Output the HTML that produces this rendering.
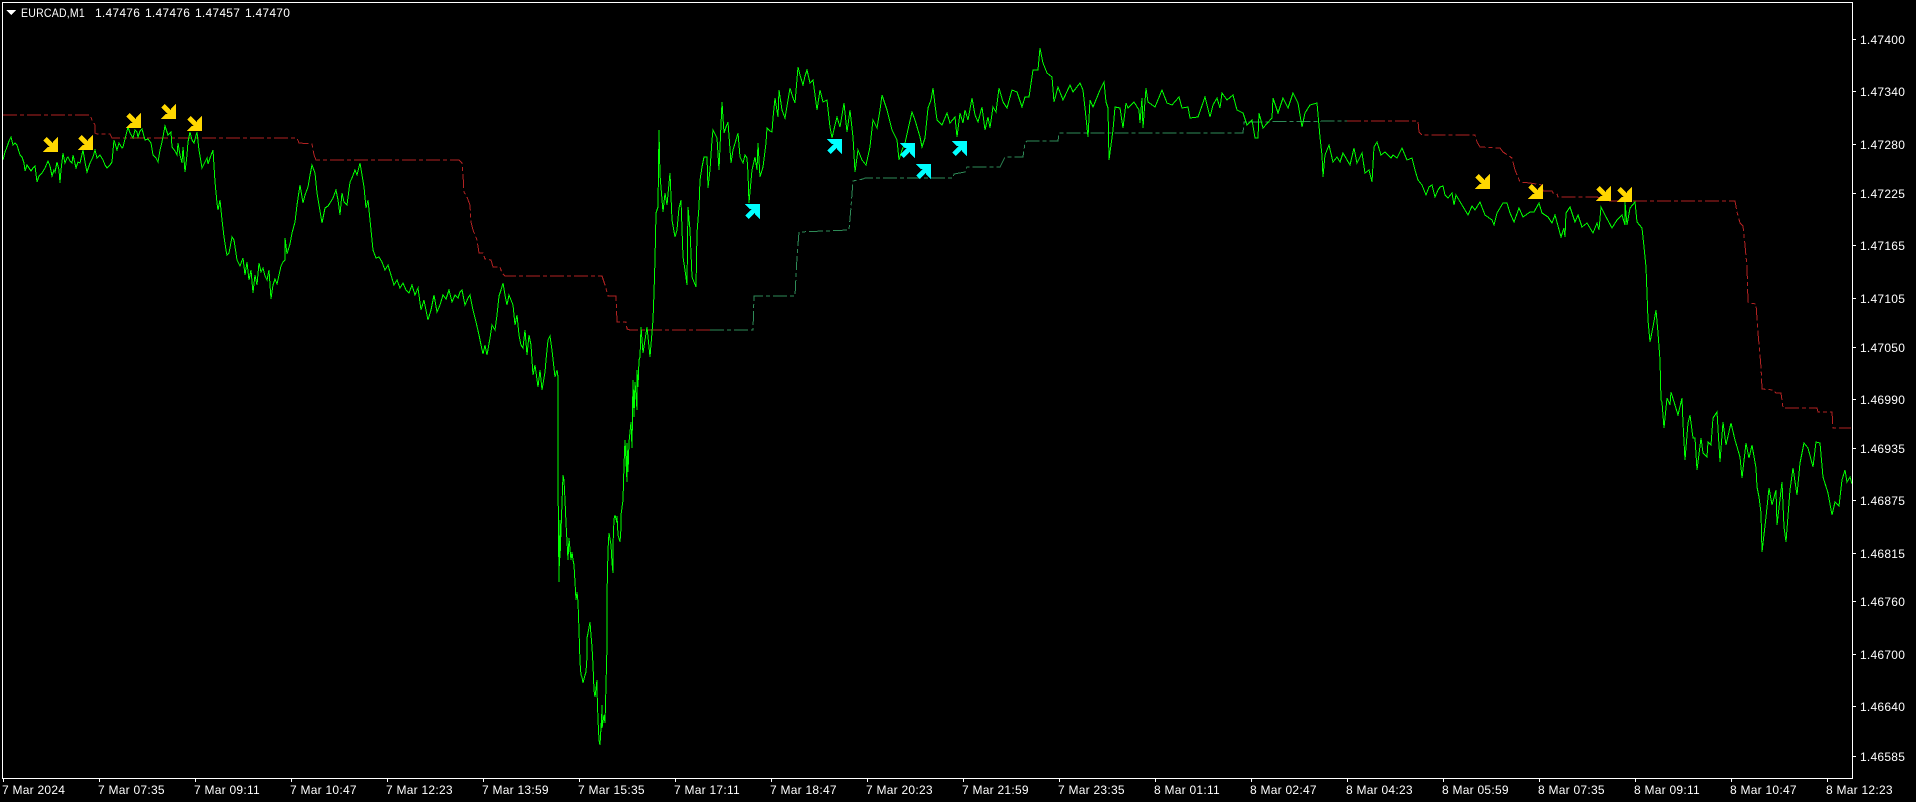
<!DOCTYPE html>
<html><head><meta charset="utf-8"><title>EURCAD,M1</title>
<style>
html,body{margin:0;padding:0;background:#000;width:1916px;height:802px;overflow:hidden}
svg{display:block}
text{font-family:"Liberation Sans",sans-serif;font-size:12px;letter-spacing:.25px;fill:#fff}
</style></head><body>
<svg width="1916" height="802" viewBox="0 0 1916 802" xmlns="http://www.w3.org/2000/svg">
<rect width="1916" height="802" fill="#000"/>
<polyline fill="none" stroke="#b22222" stroke-width="1" stroke-dasharray="14 3 4 3" shape-rendering="crispEdges" points="3,115 90,115 92,120 95,125 95,133 97,134 110,134 112,138 297,138 299,143 312,144 314,155 316,160 459,160 462,163 463,175 464,192 467,197 470,205 471,222 473,230 477,240 479,253 483,253 485,259 491,260 493,267 500,267 502,273 505,276 602,276 605,285 608,296 616,296 617,322 626,322 627,329 630,330 710,330"/>
<polyline fill="none" stroke="#2e8b57" stroke-width="1" stroke-dasharray="14 3 4 3" shape-rendering="crispEdges" points="710,330 753,330 754,296 795,296 797,257 799,232 849,230 851,207 853,181 863,179 865,178 953,178 954,174 965,172 967,167 1000,167 1002,163 1005,157 1023,157 1025,143 1027,141 1058,141 1059,133 1243,133 1244,122 1347,121"/>
<polyline fill="none" stroke="#b22222" stroke-width="1" stroke-dasharray="14 3 4 3" shape-rendering="crispEdges" points="1347,121 1418,121 1419,132 1422,135 1475,135 1477,142 1480,147 1500,148 1503,152 1512,158 1515,170 1520,182 1530,183 1542,185 1543,191 1552,191 1553,193 1557,194 1558,197 1597,197 1610,201 1735,201 1737,212 1740,223 1743,226 1745,245 1747,267 1748,302 1750,303 1756,304 1758,333 1761,367 1762,389 1773,390 1776,393 1781,393 1783,408 1817,408 1818,412 1832,412 1833,428 1851,428"/>
<polyline fill="none" stroke="#00ff00" stroke-width="1" shape-rendering="crispEdges" stroke-linejoin="miter" points="3,160 5,152 7,147 9,141 11,137 13,145 15,143 17,145 20,155 22,157 24,163 25,171 27,165 29,168 31,171 33,168 35,166 37,182 39,176 42,173 45,168 48,161 50,166 52,176 54,170 55,172 57,162 59,170 60,183 61,170 63,153 65,163 67,158 68,157 70,161 72,163 73,155 76,168 78,162 80,163 83,150 85,162 87,172 90,163 93,157 95,150 97,158 100,155 103,160 105,165 107,168 110,165 112,162 114,140 117,150 119,143 122,148 123,147 126,135 128,127 130,133 133,138 135,130 137,132 138,137 140,131 142,129 145,140 148,139 151,143 153,155 156,158 158,162 160,150 162,142 165,126 168,135 171,132 172,147 175,151 177,155 178,143 180,155 182,163 183,147 185,172 187,155 188,142 190,132 192,140 194,143 197,132 199,150 202,168 205,162 207,158 208,164 210,158 213,150 215,182 217,203 218,210 220,200 222,220 224,237 226,250 227,255 229,253 232,237 234,240 237,260 240,266 243,258 245,275 247,262 249,280 251,270 253,293 255,275 257,285 259,263 261,272 263,268 265,276 267,280 269,270 271,299 273,285 275,279 277,284 279,275 281,266 283,262 285,260 285,238 287,254 290,244 292,233 295,222 297,205 300,185 303,203 305,195 308,187 310,175 312,165 315,173 317,193 319,205 322,223 325,208 328,206 330,203 333,198 336,190 338,200 340,215 342,193 344,202 347,205 350,182 352,178 355,170 357,175 360,163 362,175 364,187 366,208 368,200 371,230 373,250 376,258 379,257 382,262 385,270 388,265 391,275 394,285 397,280 400,288 403,283 406,290 409,293 412,285 415,295 418,288 421,310 424,300 428,320 431,310 434,295 437,312 440,305 443,295 446,299 449,290 452,302 455,295 458,298 460,292 462,290 465,305 468,298 470,295 473,310 476,322 479,335 481,345 483,354 485,345 487,355 490,338 492,325 495,330 497,315 499,296 501,290 503,283 505,295 507,305 509,295 511,300 513,305 515,325 517,315 519,335 521,345 523,348 525,330 527,355 529,335 531,345 532,360 533,375 535,365 538,387 540,370 542,390 545,372 546,360 548,340 550,336 552,350 554,368 555,377 557,370 558,377 558,480 559,582 560,520 560,558 562,503 563,475 564,480 565,500 566,523 568,560 569,538 571,560 572,552 573,560 574,565 575,582 576,600 577,592 578,602 579,630 580,662 581,675 582,677 583,683 585,675 586,672 587,657 587,638 588,633 590,622 591,635 592,647 593,665 594,690 595,697 597,680 597,690 598,720 599,740 600,745 602,710 602,705 602,728 604,715 605,723 606,685 607,645 607,595 608,550 609,533 611,545 612,563 613,573 613,545 614,519 615,515 617,523 617,516 618,535 620,542 621,528 621,515 623,500 624,465 625,440 627,482 627,443 628,472 629,442 631,422 632,448 633,380 634,417 635,382 637,410 637,370 638,387 639,360 640,357 641,327 643,353 647,327 650,357 653,320 654,293 655,260 656,213 658,207 659,130 660,175 663,212 665,193 667,205 670,173 672,220 675,237 677,230 679,208 681,200 683,257 685,270 687,285 688,207 690,230 692,277 696,287 697,233 699,207 700,180 702,167 704,157 707,157 708,188 710,170 712,140 713,130 715,134 717,138 719,170 722,102 724,133 726,127 728,122 731,163 733,150 736,140 738,133 740,157 743,163 745,155 747,158 748,173 749,203 752,170 755,157 757,170 758,143 760,177 763,167 766,143 767,128 770,131 772,132 773,118 775,98 778,117 779,90 782,110 785,118 788,100 790,88 793,98 795,103 798,67 800,75 803,85 805,76 807,70 810,83 813,80 817,110 820,90 823,102 827,100 830,127 832,138 835,125 837,117 840,127 842,115 844,103 847,132 850,110 853,137 855,172 858,150 862,160 866,165 870,147 873,120 877,128 880,110 882,95 887,110 892,130 897,140 899,160 902,150 905,143 909,125 912,112 915,120 920,137 922,147 925,138 928,108 931,100 933,88 935,105 937,120 942,125 947,113 950,123 955,117 957,137 960,113 963,123 965,110 968,120 972,98 975,115 978,122 982,107 985,130 988,117 990,128 993,107 996,112 999,88 1003,102 1007,108 1012,90 1017,92 1022,107 1025,97 1029,97 1033,70 1038,70 1040,48 1043,63 1047,73 1052,77 1054,102 1058,87 1063,100 1070,85 1073,92 1080,83 1083,90 1085,108 1088,137 1090,100 1093,107 1100,90 1104,82 1106,102 1108,108 1109,160 1113,130 1115,107 1120,108 1123,128 1126,103 1128,108 1134,102 1139,110 1140,123 1142,98 1143,128 1146,88 1148,102 1155,107 1162,90 1167,103 1172,105 1179,97 1182,108 1188,107 1190,118 1198,117 1205,97 1210,117 1213,105 1217,98 1220,108 1222,93 1227,100 1233,95 1237,110 1243,113 1247,125 1252,120 1255,138 1258,138 1259,113 1263,128 1272,118 1273,98 1278,113 1283,98 1288,108 1293,93 1298,103 1302,127 1305,113 1310,105 1317,103 1320,137 1322,155 1323,177 1325,155 1329,145 1333,162 1337,157 1340,162 1343,153 1350,165 1354,148 1357,163 1362,153 1365,173 1369,170 1372,182 1374,147 1377,142 1381,155 1385,152 1391,158 1393,155 1397,158 1402,148 1407,160 1412,158 1415,170 1418,180 1422,185 1426,195 1429,187 1432,185 1435,197 1438,190 1440,187 1443,186 1445,195 1448,198 1452,193 1454,205 1456,195 1462,205 1468,215 1472,206 1475,210 1480,202 1485,215 1492,220 1494,225 1497,213 1503,203 1507,203 1510,213 1514,222 1519,208 1523,217 1530,212 1534,212 1539,203 1542,213 1548,217 1552,223 1555,215 1561,237 1564,228 1565,237 1566,213 1570,207 1575,222 1578,215 1582,227 1587,223 1593,233 1597,223 1599,230 1601,207 1605,215 1612,228 1617,220 1622,215 1625,225 1625,202 1627,225 1630,208 1635,202 1637,222 1642,228 1644,247 1646,267 1648,320 1650,342 1653,327 1656,310 1658,333 1660,360 1661,400 1662,402 1664,428 1667,398 1670,405 1671,392 1675,405 1678,415 1682,398 1683,423 1685,460 1688,423 1690,415 1693,438 1695,438 1697,470 1701,438 1703,453 1707,457 1708,442 1711,445 1713,418 1717,412 1720,462 1723,422 1726,445 1731,423 1735,440 1740,457 1742,478 1746,443 1749,458 1752,445 1756,468 1757,487 1759,497 1761,513 1762,552 1766,517 1769,488 1772,505 1776,490 1777,525 1782,482 1784,527 1786,542 1790,490 1793,468 1797,495 1800,463 1804,443 1808,448 1813,467 1816,442 1820,443 1823,477 1828,493 1832,515 1835,502 1839,506 1842,480 1845,470 1847,482 1850,477 1852,484"/>
<defs>
<path id="y" d="M15 0V15H0L4.5 10H6.5L0 3.5L3.5 0L10 6.5V4.5Z" fill="#ffd700"/>
<path id="c" d="M15 15V0H0L4.5 5H6.5L0 11.5L3.5 15L10 8.5V10.5Z" fill="#00ffff"/>
</defs>
<g shape-rendering="crispEdges">
<use href="#y" x="43" y="137"/><use href="#y" x="78" y="135"/><use href="#y" x="126" y="113"/><use href="#y" x="161" y="104"/><use href="#y" x="187" y="116"/>
<use href="#y" x="1475" y="174"/><use href="#y" x="1528" y="184"/><use href="#y" x="1596" y="186"/><use href="#y" x="1617" y="187"/>
<use href="#c" x="745" y="204"/><use href="#c" x="827" y="139"/><use href="#c" x="900" y="143"/><use href="#c" x="916" y="164"/><use href="#c" x="952" y="141"/>
</g>
<g fill="#fff" shape-rendering="crispEdges">
<rect x="2" y="2" width="1851" height="1"/><rect x="2" y="778" width="1851" height="1"/><rect x="2" y="2" width="1" height="777"/><rect x="1852" y="2" width="1" height="777"/>
<rect x="1853" y="39" width="3" height="1"/><rect x="1853" y="91" width="3" height="1"/><rect x="1853" y="144" width="3" height="1"/><rect x="1853" y="193" width="3" height="1"/><rect x="1853" y="245" width="3" height="1"/><rect x="1853" y="298" width="3" height="1"/><rect x="1853" y="347" width="3" height="1"/><rect x="1853" y="399" width="3" height="1"/><rect x="1853" y="448" width="3" height="1"/><rect x="1853" y="500" width="3" height="1"/><rect x="1853" y="553" width="3" height="1"/><rect x="1853" y="601" width="3" height="1"/><rect x="1853" y="654" width="3" height="1"/><rect x="1853" y="706" width="3" height="1"/><rect x="1853" y="756" width="3" height="1"/>
<rect x="3" y="779" width="1" height="3"/><rect x="99" y="779" width="1" height="3"/><rect x="195" y="779" width="1" height="3"/><rect x="291" y="779" width="1" height="3"/><rect x="387" y="779" width="1" height="3"/><rect x="483" y="779" width="1" height="3"/><rect x="579" y="779" width="1" height="3"/><rect x="675" y="779" width="1" height="3"/><rect x="771" y="779" width="1" height="3"/><rect x="867" y="779" width="1" height="3"/><rect x="963" y="779" width="1" height="3"/><rect x="1059" y="779" width="1" height="3"/><rect x="1155" y="779" width="1" height="3"/><rect x="1251" y="779" width="1" height="3"/><rect x="1347" y="779" width="1" height="3"/><rect x="1443" y="779" width="1" height="3"/><rect x="1539" y="779" width="1" height="3"/><rect x="1635" y="779" width="1" height="3"/><rect x="1731" y="779" width="1" height="3"/><rect x="1827" y="779" width="1" height="3"/>
<path d="M6 10H16L11 15Z"/>
</g>
<text x="21" y="17" textLength="64" lengthAdjust="spacingAndGlyphs">EURCAD,M1</text><text x="95" y="17">1.47476</text><text x="145" y="17">1.47476</text><text x="195" y="17">1.47457</text><text x="245" y="17">1.47470</text>
<text x="1860" y="44">1.47400</text><text x="1860" y="96">1.47340</text><text x="1860" y="149">1.47280</text><text x="1860" y="198">1.47225</text><text x="1860" y="250">1.47165</text><text x="1860" y="303">1.47105</text><text x="1860" y="352">1.47050</text><text x="1860" y="404">1.46990</text><text x="1860" y="453">1.46935</text><text x="1860" y="505">1.46875</text><text x="1860" y="558">1.46815</text><text x="1860" y="606">1.46760</text><text x="1860" y="659">1.46700</text><text x="1860" y="711">1.46640</text><text x="1860" y="761">1.46585</text>
<text x="2" y="794">7 Mar 2024</text><text x="98" y="794">7 Mar 07:35</text><text x="194" y="794">7 Mar 09:11</text><text x="290" y="794">7 Mar 10:47</text><text x="386" y="794">7 Mar 12:23</text><text x="482" y="794">7 Mar 13:59</text><text x="578" y="794">7 Mar 15:35</text><text x="674" y="794">7 Mar 17:11</text><text x="770" y="794">7 Mar 18:47</text><text x="866" y="794">7 Mar 20:23</text><text x="962" y="794">7 Mar 21:59</text><text x="1058" y="794">7 Mar 23:35</text><text x="1154" y="794">8 Mar 01:11</text><text x="1250" y="794">8 Mar 02:47</text><text x="1346" y="794">8 Mar 04:23</text><text x="1442" y="794">8 Mar 05:59</text><text x="1538" y="794">8 Mar 07:35</text><text x="1634" y="794">8 Mar 09:11</text><text x="1730" y="794">8 Mar 10:47</text><text x="1826" y="794">8 Mar 12:23</text>
</svg>
</body></html>
